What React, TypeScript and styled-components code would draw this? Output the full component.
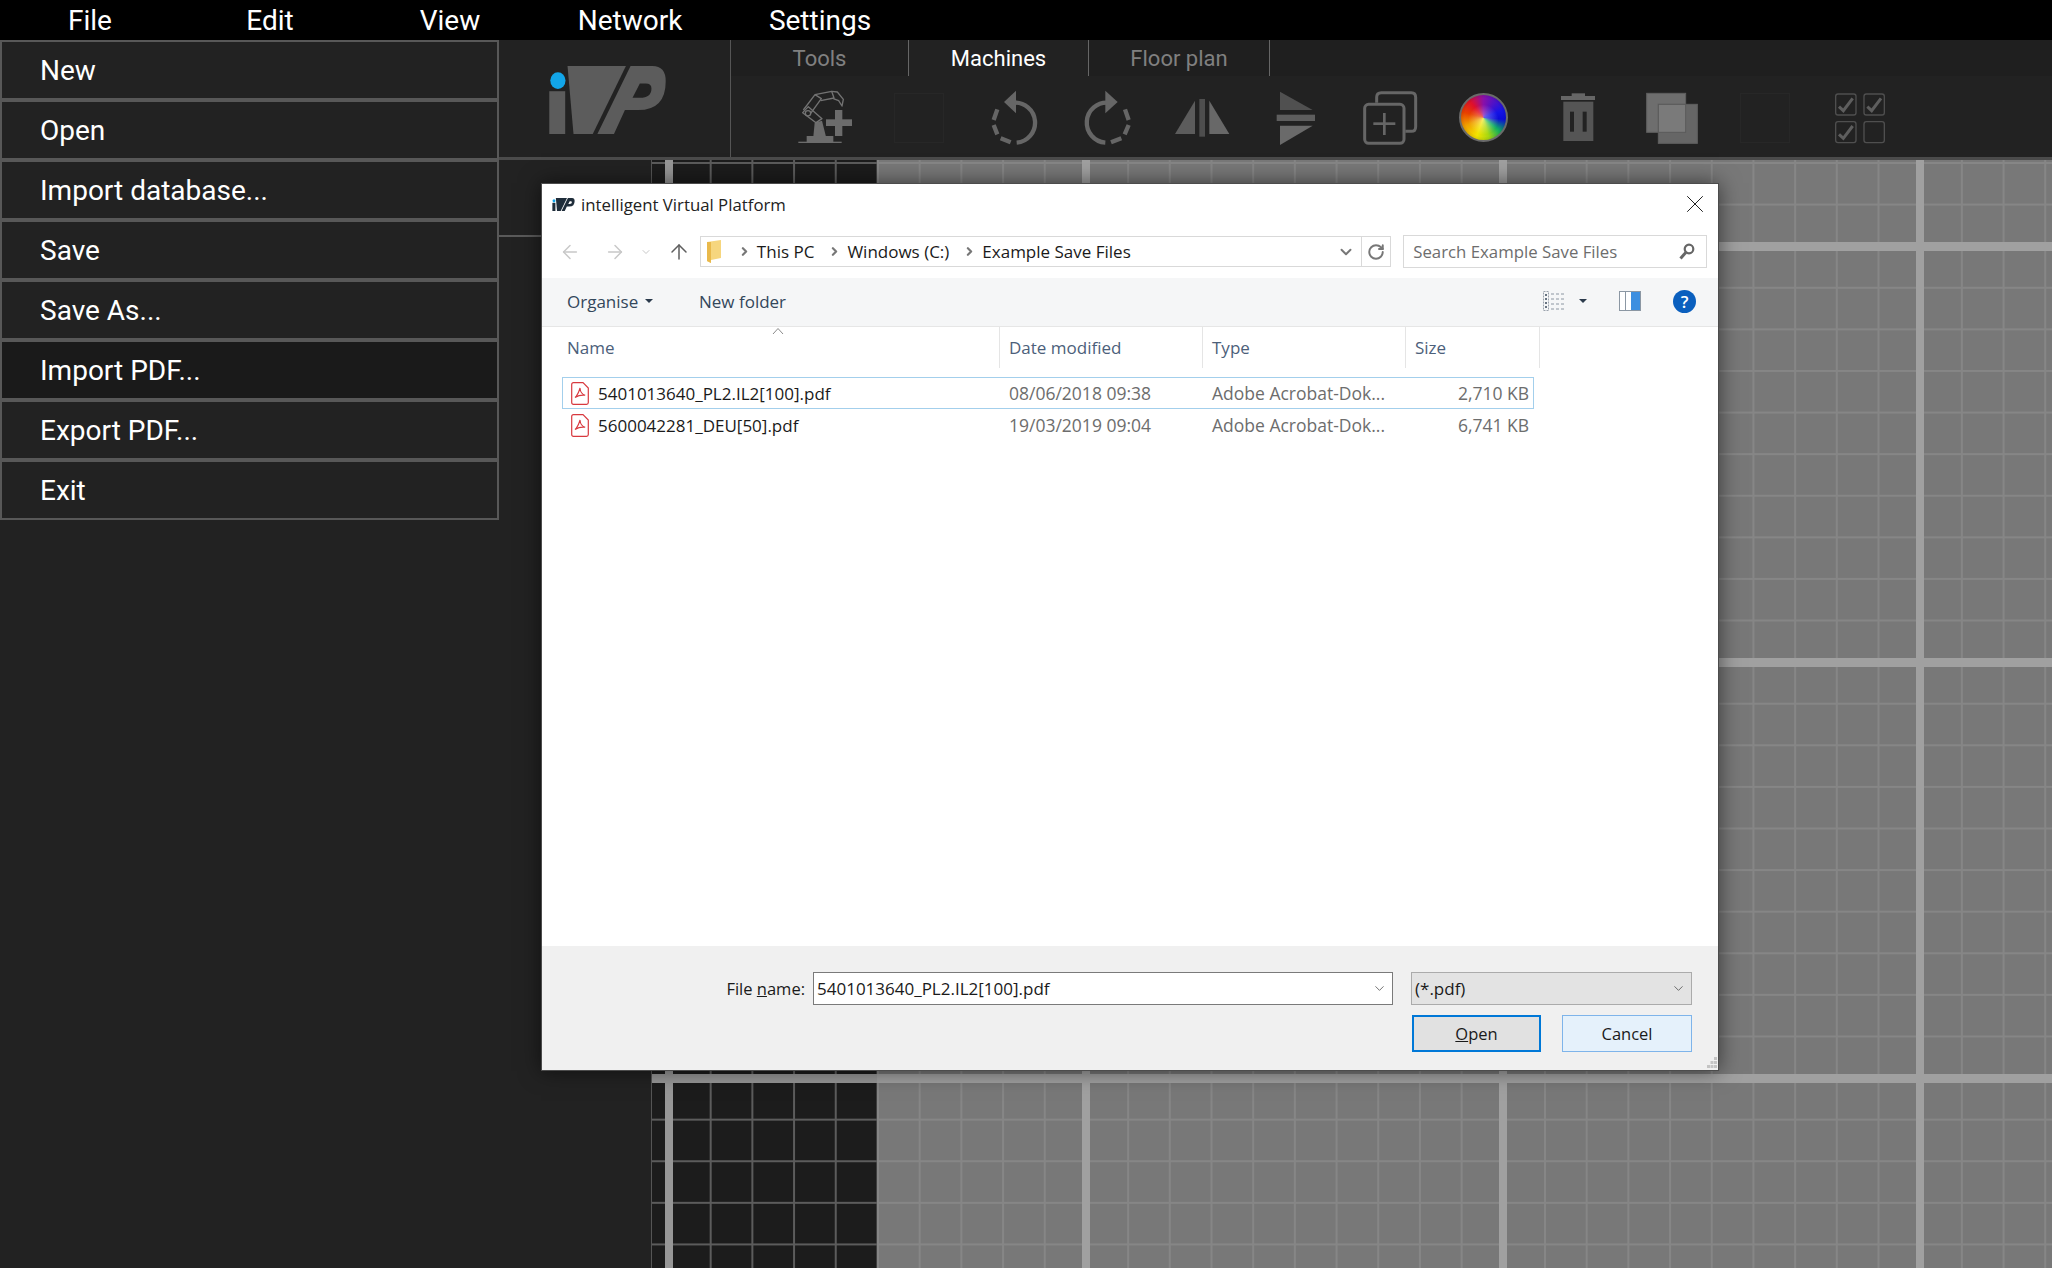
import React from 'react';
import styled, { createGlobalStyle, css } from 'styled-components';
import { ArrowLeft, ArrowRight, ArrowUp, ChevronDown, ChevronRight, RotateCw, X } from 'lucide-react';

const GlobalStyle = createGlobalStyle`
  html, body {
    margin: 0;
    padding: 0;
    background: #222;
  }
  * {
    box-sizing: border-box;
  }
`;

const Page = styled.div`
  position: relative;
  width: 2052px;
  height: 1268px;
  overflow: hidden;
  display: flex;
  flex-direction: column;
  font-family: Roboto, sans-serif;
`;

const MenuBar = styled.div`
  height: 40px;
  display: flex;
  background: #000;
`;

const MenuTitle = styled.div<{ $width: number }>`
  width: ${(props) => props.$width}px;
  display: flex;
  align-items: center;
  justify-content: center;
  color: #fff;
  font-size: 28px;
`;

const Body = styled.div`
  flex: 1;
  display: flex;
  min-height: 0;
`;

const Sidebar = styled.div`
  width: 499px;
  display: flex;
  flex-direction: column;
  background: #222;
`;

const FileItem = styled.div<{ $active?: boolean }>`
  height: 60px;
  display: flex;
  align-items: center;
  padding-left: 38px;
  border: 2px solid #585858;
  background: ${(props) => (props.$active ? '#1a1a1a' : '#222')};
  color: #fff;
  font-size: 28px;
`;

const Main = styled.div`
  flex: 1;
  display: flex;
  flex-direction: column;
  min-width: 0;
`;

const TopPanel = styled.div`
  height: 120px;
  display: flex;
  background: #222;
  border-bottom: 3px solid #4b4b4b;
`;

const LogoPanel = styled.div`
  width: 232px;
  padding: 26px 0 0 50px;
  border-right: 1px solid #555;
`;

const ToolArea = styled.div`
  flex: 1;
  display: flex;
  flex-direction: column;
`;

const Tabs = styled.div`
  height: 36px;
  display: flex;
  background: #1f1f1f;
`;

const Tab = styled.div<{ $active?: boolean; $width: number }>`
  width: ${(props) => props.$width}px;
  display: flex;
  align-items: center;
  justify-content: center;
  border-right: 1px solid #666;
  background: ${(props) => (props.$active ? '#222' : 'transparent')};
  color: ${(props) => (props.$active ? '#fff' : '#808080')};
  font-size: 22px;
`;

const Tools = styled.div`
  display: flex;
  padding: 4px 0 0 47px;
`;

const ToolSlot = styled.div`
  width: 94px;
  height: 75px;
  display: flex;
  align-items: center;
  justify-content: center;
`;

const ToolSvg = styled.svg`
  display: block;
  width: 94px;
  height: 75px;
`;

const BlankTool = styled.div`
  width: 50px;
  height: 50px;
  border: 1px solid #272727;
`;

const ColorWheel = styled.div`
  width: 49px;
  height: 49px;
  border-radius: 50%;
  border: 2px solid #6a6a6a;
  background:
    radial-gradient(circle at 50% 55%, rgba(255, 255, 255, 0.4) 0, rgba(255, 255, 255, 0) 45%),
    radial-gradient(circle, rgba(0, 0, 0, 0) 60%, rgba(0, 0, 0, 0.32) 100%),
    conic-gradient(#8a10a8 0deg, #1414e6 70deg, #0b0bd8 95deg, #10b060 130deg, #a8d810 165deg, #f4e400 200deg, #f0a000 245deg, #e84000 285deg, #e0102a 320deg, #8a10a8 360deg);
`;

const WorkArea = styled.div`
  flex: 1;
  display: flex;
  min-height: 0;
`;

const LeftPad = styled.div`
  width: 153px;
  background: #222;
  border-right: 1px solid #555;
`;

const PadRow = styled.div`
  height: 77px;
  border-bottom: 2px solid #5a5a5a;
`;

const gridLines = (thinX: number, thickX: number, thin: string, thick: string) => css`
  background-image:
    linear-gradient(90deg, ${thick} 8px, transparent 8px),
    linear-gradient(180deg, ${thick} 9px, transparent 9px),
    linear-gradient(90deg, ${thin} 2px, transparent 2px),
    linear-gradient(180deg, ${thin} 2px, transparent 2px);
  background-size: 417px 100%, 100% 416px, 41.7px 100%, 100% 41.6px;
  background-position: ${thickX}px 0, 0 82px, ${thinX}px 0, 0 2px;
`;

const GridPane = styled.div<{ $dark?: boolean; $thinX: number; $thickX: number }>`
  height: 100%;
  ${(props) => (props.$dark ? 'width: 225px;' : 'flex: 1;')}
  background-color: ${(props) => (props.$dark ? '#1c1c1c' : '#787878')};
  ${(props) =>
    props.$dark
      ? gridLines(props.$thinX, props.$thickX, '#5c5c5c', '#979797')
      : gridLines(props.$thinX, props.$thickX, '#868686', '#a0a0a0')}
`;

// the save dialog floats over the whole app
const Dialog = styled.div`
  position: absolute;
  left: 541px;
  top: 183px;
  width: 1178px;
  height: 888px;
  display: flex;
  flex-direction: column;
  background: #fff;
  border: 1px solid #4c4c4c;
  box-shadow: 0 0 20px rgba(0, 0, 0, 0.55);
  font-family: 'Open Sans', 'Noto Sans', sans-serif;
  font-size: 17px;
  color: #1a1a1a;
`;

const TitleBar = styled.div`
  height: 43px;
  display: flex;
  align-items: center;
  padding: 0 8px 3px 10px;
`;

const DialogTitle = styled.div`
  flex: 1;
  margin-left: 6px;
  font-size: 16.8px;
  color: #222;
`;

const NavRow = styled.div`
  height: 51px;
  display: flex;
  align-items: center;
  padding: 0 11px 2px 0;
  color: #c4c4c4;
`;

const NavButton = styled.div<{ $width: number; $color?: string }>`
  width: ${(props) => props.$width}px;
  display: flex;
  justify-content: center;
  color: ${(props) => props.$color || '#c8c8c8'};
`;

const AddressBox = styled.div`
  width: 692px;
  height: 31px;
  display: flex;
  align-items: center;
  margin-left: 2px;
  padding-left: 6px;
  border: 1px solid #d9d9d9;
  color: #1a1a1a;
  font-size: 17px;
`;

const Crumb = styled.span`
  margin: 0 8px 0 0;
  white-space: nowrap;
`;

const CrumbSep = styled.span<{ $first?: boolean }>`
  display: flex;
  width: 25px;
  justify-content: center;
  margin-left: ${(props) => (props.$first ? 10 : 0)}px;
  color: #777;
`;

const AddressEnd = styled.div`
  margin-left: auto;
  display: flex;
  align-items: center;
  height: 100%;
  color: #777;
`;

const RefreshBox = styled.div`
  width: 29px;
  height: 100%;
  display: flex;
  align-items: center;
  justify-content: center;
  margin-left: 6px;
  border-left: 1px solid #d9d9d9;
`;

const SearchBox = styled.div`
  width: 304px;
  height: 33px;
  display: flex;
  align-items: center;
  justify-content: space-between;
  margin-left: 12px;
  padding: 0 11px 0 9px;
  border: 1px solid #d9d9d9;
  color: #6d6d6d;
  font-size: 16.8px;
`;

const CommandBar = styled.div`
  height: 49px;
  display: flex;
  align-items: center;
  padding: 0 22px 2px 25px;
  background: #f5f6f7;
  border-bottom: 1px solid #e6e6e6;
  color: #33475b;
  font-size: 17px;
`;

const CommandButton = styled.div<{ $width?: number }>`
  display: flex;
  align-items: center;
  gap: 7px;
  ${(props) => props.$width && `width: ${props.$width}px;`}
`;

const CommandIcons = styled.div`
  margin-left: auto;
  display: flex;
  align-items: center;
`;

const Caret = styled.span<{ $wide?: boolean }>`
  width: 0;
  height: 0;
  ${(props) => props.$wide && 'margin: 0 32px 0 14px;'}
  border-left: 4px solid transparent;
  border-right: 4px solid transparent;
  border-top: 4px solid #2b3a4c;
`;

const Help = styled.div`
  width: 23px;
  height: 23px;
  display: flex;
  align-items: center;
  justify-content: center;
  margin-left: 32px;
  border-radius: 50%;
  background: #0a5fbe;
  color: #fff;
  font-size: 17px;
  font-weight: 600;
`;

const HeaderRow = styled.div`
  position: relative;
  height: 41px;
  display: grid;
  grid-template-columns: 458px 203px 203px 134px;
  color: #4c607a;
  font-size: 17px;
`;

const HeaderCell = styled.div<{ $pad: number }>`
  display: flex;
  align-items: center;
  padding-left: ${(props) => props.$pad}px;
  border-right: 1px solid #e5e5e5;
`;

const SortMark = styled.svg`
  position: absolute;
  left: 230px;
  top: 0;
`;

const FileList = styled.div`
  flex: 1;
  padding: 9px 0 0 20px;
`;

const FileRow = styled.div<{ $selected?: boolean }>`
  width: 972px;
  height: 32px;
  display: grid;
  grid-template-columns: 437px 203px 203px 1fr;
  align-items: center;
  border: 1px solid ${(props) => (props.$selected ? '#a3cfec' : 'transparent')};
`;

const NameCell = styled.div`
  display: flex;
  align-items: center;
  gap: 9px;
  padding-left: 8px;
  font-size: 17px;
`;

const MetaCell = styled.div<{ $right?: boolean }>`
  padding: ${(props) => (props.$right ? '0 4px 0 0' : '0 0 0 9px')};
  text-align: ${(props) => (props.$right ? 'right' : 'left')};
  color: #6d6d6d;
  font-size: 17.5px;
`;

const Footer = styled.div`
  position: relative;
  height: 124px;
  display: flex;
  flex-direction: column;
  gap: 10px;
  padding: 26px 26px 0 0;
  background: #f0f0f0;
`;

const FooterLine = styled.div`
  display: flex;
  justify-content: flex-end;
  align-items: center;
`;

const FieldLabel = styled.div`
  margin-right: 8px;
  font-size: 16.5px;
`;

const NameInput = styled.div`
  width: 580px;
  height: 33px;
  display: flex;
  align-items: center;
  justify-content: space-between;
  padding: 0 5px 0 3px;
  background: #fff;
  border: 1px solid #7a7a7a;
  font-size: 17px;
`;

const FilterSelect = styled.div`
  width: 281px;
  height: 33px;
  display: flex;
  align-items: center;
  justify-content: space-between;
  margin-left: 18px;
  padding: 0 5px 0 3px;
  background: #e3e3e3;
  border: 1px solid #ababab;
  font-size: 17px;
`;

const DialogButton = styled.div<{ $primary?: boolean }>`
  width: ${(props) => (props.$primary ? 129 : 130)}px;
  height: 37px;
  display: flex;
  align-items: center;
  justify-content: center;
  margin-left: ${(props) => (props.$primary ? 0 : 21)}px;
  background: ${(props) => (props.$primary ? '#e1e1e1' : '#e5f1fb')};
  border: ${(props) => (props.$primary ? '2px solid #0078d7' : '1px solid #7eb4ea')};
  font-size: 16.5px;
`;

const Grip = styled.svg`
  position: absolute;
  right: 1px;
  bottom: 1px;
`;

function Logo({ width, height, body, dot }: { width: number; height: number; body: string; dot: string }) {
  return (
    <svg width={width} height={height} viewBox="27 32 351 205" style={{ display: 'block', overflow: 'visible' }}>
      <rect x="27" y="108" width="48" height="129" fill={body} />
      <polygon points="82,32 258,32 158,237 100,237" fill={body} />
      <path
        fillRule="evenodd"
        fill={body}
        d="M272 32 H338 Q378 32 378 78 Q378 165 295 165 H255 L222 237 H172 Z M300 85 L278 128 H300 Q335 128 335 100 Q335 85 318 85 Z"
      />
      <ellipse cx="53" cy="76" rx="23" ry="25" fill={dot} />
    </svg>
  );
}

function RobotIcon() {
  return (
    <ToolSvg viewBox="-6 0 282 225">
      <g fill="#6c6c6c">
        <rect x="55" y="185" width="130" height="4" />
        <rect x="80" y="168" width="80" height="18" />
        <polygon points="104,128 126,122 138,170 100,170" />
        <rect x="138" y="118" width="78" height="20" />
        <rect x="165" y="90" width="22" height="78" />
      </g>
      <g fill="none" stroke="#737373" strokeWidth="4" strokeLinejoin="round">
        <path d="M85 80 L126 116 L108 128 L68 98 Z" />
        <path d="M70 90 L105 44 L124 56 L92 100" />
        <path d="M105 44 L155 34 L162 54 L122 62" />
        <path d="M155 34 L172 36 L190 58 L186 78 L176 62 L160 56" />
        <circle cx="84" cy="100" r="8" />
      </g>
    </ToolSvg>
  );
}

function UndoIcon() {
  return (
    <ToolSvg viewBox="558 0 282 225">
      <g fill="none" stroke="#666" strokeWidth="13">
        <path d="M700 68 A60 60 0 0 1 710 188" />
        <path d="M692 187 L662 175 M652 163 L641 135 M641 120 L652 88" />
      </g>
      <polygon points="708,32 708,100 672,66" fill="#666" />
    </ToolSvg>
  );
}

function RedoIcon() {
  return (
    <ToolSvg viewBox="840 0 282 225">
      <g fill="none" stroke="#666" strokeWidth="13">
        <path d="M985 68 A60 60 0 0 0 976 188" />
        <path d="M993 187 L1024 175 M1034 163 L1046 135 M1046 120 L1035 88" />
      </g>
      <polygon points="976,32 976,100 1013,66" fill="#666" />
    </ToolSvg>
  );
}

function FlipHorizontalIcon() {
  return (
    <ToolSvg viewBox="1122 0 282 225">
      <polygon points="1245,62 1245,162 1185,162" fill="#5c5c5c" />
      <rect x="1258" y="57" width="17" height="113" fill="#4e4e4e" />
      <polygon points="1288,62 1288,162 1348,162" fill="#686868" />
    </ToolSvg>
  );
}

function FlipVerticalIcon() {
  return (
    <ToolSvg viewBox="-66 0 282 225">
      <polygon points="30,35 30,90 128,90" fill="#505050" />
      <rect x="20" y="104" width="115" height="19" fill="#5e5e5e" />
      <polygon points="30,137 128,137 30,195" fill="#6a6a6a" />
    </ToolSvg>
  );
}

function CopyPlusIcon() {
  return (
    <ToolSvg viewBox="216 0 282 225">
      <g fill="none" stroke="#666" strokeWidth="9">
        <path d="M320 68 V52 Q320 38 334 38 H424 Q437 38 437 52 V140 Q437 154 424 154 H406" />
        <rect x="284" y="73" width="118" height="117" rx="12" />
      </g>
      <rect x="310" y="127" width="66" height="8" fill="#666" />
      <rect x="339" y="99" width="8" height="66" fill="#666" />
    </ToolSvg>
  );
}

function TrashIcon() {
  return (
    <ToolSvg viewBox="780 0 282 225">
      <rect x="905" y="40" width="40" height="10" fill="#666" />
      <rect x="873" y="48" width="102" height="12" fill="#666" />
      <rect x="880" y="65" width="90" height="118" fill="#555" />
      <rect x="900" y="95" width="12" height="60" fill="#222" />
      <rect x="938" y="95" width="12" height="60" fill="#222" />
    </ToolSvg>
  );
}

function LayersIcon() {
  return (
    <ToolSvg viewBox="1062 0 282 225">
      <rect x="1130" y="40" width="117" height="117" fill="#6e6e6e" stroke="#5f5f5f" strokeWidth="3" />
      <rect x="1165" y="73" width="117" height="117" fill="#666" stroke="#5f5f5f" strokeWidth="3" />
      <rect x="1165" y="73" width="82" height="84" fill="#7a7a7a" stroke="#5a5a5a" strokeWidth="3" />
    </ToolSvg>
  );
}

function ChecksIcon() {
  return (
    <ToolSvg viewBox="-24 0 282 225">
      <g fill="none" stroke="#4f4f4f" strokeWidth="4">
        <rect x="47" y="42" width="61" height="63" rx="7" />
        <rect x="132" y="42" width="61" height="63" rx="7" />
        <rect x="47" y="125" width="61" height="63" rx="7" />
        <rect x="132" y="125" width="61" height="63" rx="7" />
      </g>
      <g fill="none" stroke="#5e5e5e" strokeWidth="9">
        <path d="M57 80 L70 92 L98 55" />
        <path d="M142 80 L155 92 L183 55" />
        <path d="M57 163 L70 175 L98 138" />
      </g>
    </ToolSvg>
  );
}

function PdfIcon() {
  return (
    <svg width="18" height="23" viewBox="0 0 18 23">
      <path
        d="M2.5 0.7 H12 L17.3 6 V20.5 Q17.3 22.3 15.5 22.3 H2.5 Q0.7 22.3 0.7 20.5 V2.5 Q0.7 0.7 2.5 0.7 Z"
        fill="#fff"
        stroke="#d8393f"
        strokeWidth="1.2"
      />
      <path d="M4 15.5 Q7 13 9 6 Q9.5 12 14.2 13.3 Q9 12.5 4 15.5 Z" fill="none" stroke="#d8393f" strokeWidth="1.1" />
    </svg>
  );
}

function FolderIcon() {
  return (
    <svg width="15" height="23" viewBox="0 0 15 23">
      <polygon points="0,2 14,0 14,18 4,20 4,23 0,21" fill="#f6d67e" />
      <polygon points="0,2 4,2 4,23 0,21" fill="#e9b94b" />
    </svg>
  );
}

function SearchGlass() {
  return (
    <svg width="16" height="17" viewBox="0 0 16 17">
      <circle cx="10" cy="6" r="4.3" fill="none" stroke="#666" strokeWidth="2.2" />
      <path d="M6.8 9.5 L1.5 15.5" stroke="#666" strokeWidth="3" />
    </svg>
  );
}

function ViewListIcon() {
  return (
    <svg width="22" height="20" viewBox="0 0 22 20">
      <rect x="0.5" y="0.5" width="5" height="19" fill="none" stroke="#9aa3ad" strokeDasharray="2 1" />
      <path d="M8 3 H22 M8 8 H22 M8 13 H22 M8 18 H22" stroke="#8c96a2" strokeDasharray="3 2" />
      <path d="M2 4 H4 M2 8 H4 M2 12 H4 M2 16 H4" stroke="#3a4a5c" strokeWidth="1.5" />
    </svg>
  );
}

function PreviewPaneIcon() {
  return (
    <svg width="22" height="20" viewBox="0 0 22 20">
      <rect x="0.5" y="0.5" width="21" height="19" fill="#fff" stroke="#8b97a3" />
      <rect x="12" y="1" width="9" height="18" fill="#3d8fe0" />
      <rect x="6" y="1" width="1" height="18" fill="#8b97a3" />
    </svg>
  );
}

function App() {
  return (
    <Page>
      <GlobalStyle />
      <MenuBar>
        <MenuTitle $width={180}>File</MenuTitle>
        <MenuTitle $width={180}>Edit</MenuTitle>
        <MenuTitle $width={180}>View</MenuTitle>
        <MenuTitle $width={180}>Network</MenuTitle>
        <MenuTitle $width={200}>Settings</MenuTitle>
      </MenuBar>
      <Body>
        <Sidebar>
          <FileItem>New</FileItem>
          <FileItem>Open</FileItem>
          <FileItem>Import database...</FileItem>
          <FileItem>Save</FileItem>
          <FileItem>Save As...</FileItem>
          <FileItem $active>Import PDF...</FileItem>
          <FileItem>Export PDF...</FileItem>
          <FileItem>Exit</FileItem>
        </Sidebar>
        <Main>
          <TopPanel>
            <LogoPanel>
              <Logo width={117} height={68} body="#5c5c5c" dot="#12a5e8" />
            </LogoPanel>
            <ToolArea>
              <Tabs>
                <Tab $width={178}>Tools</Tab>
                <Tab $width={180} $active>
                  Machines
                </Tab>
                <Tab $width={181}>Floor plan</Tab>
              </Tabs>
              <Tools>
                <ToolSlot>
                  <RobotIcon />
                </ToolSlot>
                <ToolSlot>
                  <BlankTool />
                </ToolSlot>
                <ToolSlot>
                  <UndoIcon />
                </ToolSlot>
                <ToolSlot>
                  <RedoIcon />
                </ToolSlot>
                <ToolSlot>
                  <FlipHorizontalIcon />
                </ToolSlot>
                <ToolSlot>
                  <FlipVerticalIcon />
                </ToolSlot>
                <ToolSlot>
                  <CopyPlusIcon />
                </ToolSlot>
                <ToolSlot>
                  <ColorWheel />
                </ToolSlot>
                <ToolSlot>
                  <TrashIcon />
                </ToolSlot>
                <ToolSlot>
                  <LayersIcon />
                </ToolSlot>
                <ToolSlot>
                  <BlankTool />
                </ToolSlot>
                <ToolSlot>
                  <ChecksIcon />
                </ToolSlot>
              </Tools>
            </ToolArea>
          </TopPanel>
          <WorkArea>
            <LeftPad>
              <PadRow />
            </LeftPad>
            <GridPane $dark $thinX={16} $thickX={13} />
            <GridPane $thinX={0} $thickX={205} />
          </WorkArea>
        </Main>
      </Body>

      <Dialog>
        <TitleBar>
          <Logo width={23} height={13} body="#1f2d3a" dot="#12a5e8" />
          <DialogTitle>intelligent Virtual Platform</DialogTitle>
          <X size={30} strokeWidth={0.8} color="#222" />
        </TitleBar>
        <NavRow>
          <NavButton $width={56}>
            <ArrowLeft size={22} strokeWidth={1.6} />
          </NavButton>
          <NavButton $width={34}>
            <ArrowRight size={22} strokeWidth={1.6} />
          </NavButton>
          <NavButton $width={28}>
            <ChevronDown size={12} strokeWidth={2} />
          </NavButton>
          <NavButton $width={38} $color="#5e5e5e">
            <ArrowUp size={24} strokeWidth={1.5} />
          </NavButton>
          <AddressBox>
            <FolderIcon />
            <CrumbSep $first>
              <ChevronRight size={13} strokeWidth={4} />
            </CrumbSep>
            <Crumb>This PC</Crumb>
            <CrumbSep>
              <ChevronRight size={13} strokeWidth={4} />
            </CrumbSep>
            <Crumb>Windows (C:)</Crumb>
            <CrumbSep>
              <ChevronRight size={13} strokeWidth={4} />
            </CrumbSep>
            <Crumb>Example Save Files</Crumb>
            <AddressEnd>
              <ChevronDown size={18} strokeWidth={2.6} />
              <RefreshBox>
                <RotateCw size={18} strokeWidth={2.6} />
              </RefreshBox>
            </AddressEnd>
          </AddressBox>
          <SearchBox>
            Search Example Save Files
            <SearchGlass />
          </SearchBox>
        </NavRow>
        <CommandBar>
          <CommandButton $width={132}>
            Organise <Caret />
          </CommandButton>
          <CommandButton>New folder</CommandButton>
          <CommandIcons>
            <ViewListIcon />
            <Caret $wide />
            <PreviewPaneIcon />
            <Help>?</Help>
          </CommandIcons>
        </CommandBar>
        <HeaderRow>
          <HeaderCell $pad={25}>Name</HeaderCell>
          <HeaderCell $pad={9}>Date modified</HeaderCell>
          <HeaderCell $pad={9}>Type</HeaderCell>
          <HeaderCell $pad={9}>Size</HeaderCell>
          <SortMark width="12" height="8" viewBox="0 0 12 8">
            <path d="M1 7 L6 1.5 L11 7" fill="none" stroke="#8a8a8a" />
          </SortMark>
        </HeaderRow>
        <FileList>
          <FileRow $selected>
            <NameCell>
              <PdfIcon />
              5401013640_PL2.IL2[100].pdf
            </NameCell>
            <MetaCell>08/06/2018 09:38</MetaCell>
            <MetaCell>Adobe Acrobat-Dok...</MetaCell>
            <MetaCell $right>2,710 KB</MetaCell>
          </FileRow>
          <FileRow>
            <NameCell>
              <PdfIcon />
              5600042281_DEU[50].pdf
            </NameCell>
            <MetaCell>19/03/2019 09:04</MetaCell>
            <MetaCell>Adobe Acrobat-Dok...</MetaCell>
            <MetaCell $right>6,741 KB</MetaCell>
          </FileRow>
        </FileList>
        <Footer>
          <FooterLine>
            <FieldLabel>
              File <u>n</u>ame:
            </FieldLabel>
            <NameInput>
              5401013640_PL2.IL2[100].pdf
              <ChevronDown size={15} strokeWidth={1.2} color="#444" />
            </NameInput>
            <FilterSelect>
              (*.pdf)
              <ChevronDown size={15} strokeWidth={1.2} color="#444" />
            </FilterSelect>
          </FooterLine>
          <FooterLine>
            <DialogButton $primary>
              <span>
                <u>O</u>pen
              </span>
            </DialogButton>
            <DialogButton>Cancel</DialogButton>
          </FooterLine>
          <Grip width="10" height="12" viewBox="0 0 10 12">
            <path d="M7 0 H10 V3 H7 Z M3.5 4 H6.5 V7 H3.5 Z M7 4 H10 V7 H7 Z M0 8 H3 V11 H0 Z M3.5 8 H6.5 V11 H3.5 Z M7 8 H10 V11 H7 Z" fill="#c4c4c4" />
          </Grip>
        </Footer>
      </Dialog>
    </Page>
  );
}

export default App;
